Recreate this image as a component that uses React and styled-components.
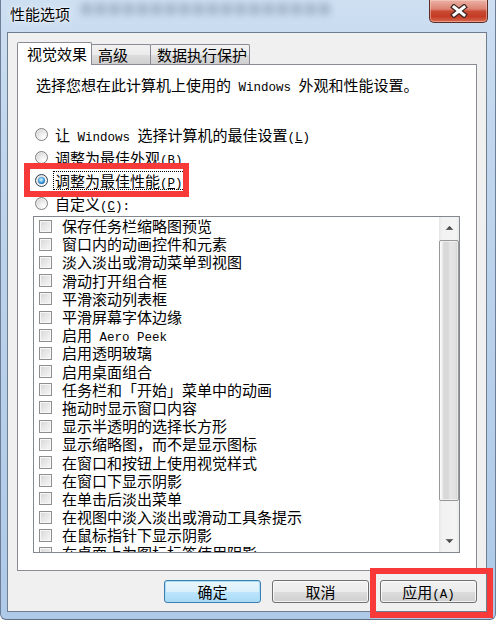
import React from "react";
import styled, { createGlobalStyle } from "styled-components";

const FONT = `"Noto Sans CJK SC", "Noto Sans CJK JP", "Noto Sans", sans-serif`;

const GlobalStyle = createGlobalStyle`
  html, body { margin: 0; padding: 0; background: #ffffff; }
  body { font-family: ${FONT}; }
  * { box-sizing: border-box; }
`;

const Window = styled.div`
  position: relative;
  width: 496px;
  height: 620px;
  display: flex;
  flex-direction: column;
  overflow: hidden;
  font-family: ${FONT};
  color: #000;
  background: linear-gradient(180deg, #cddff1 0%, #c2d7ee 20%, #b7cfea 60%, #aecae8 100%);
  border-left: 1px solid #6d7f96;
  border-right: 1px solid #6d7f96;
  border-bottom: 1px solid #5f7088;
  border-radius: 0 0 6px 6px;
`;

const TitleBar = styled.div`
  position: relative;
  height: 32px;
  flex: none;
  display: flex;
  align-items: center;
  padding-left: 9px;
`;

const Backdrop = styled.div`
  position: absolute;
  left: 80px;
  top: 3px;
  width: 250px;
  height: 12px;
  filter: blur(3.5px);
  opacity: 0.3;
  background: repeating-linear-gradient(90deg, #51627a 0 11px, transparent 11px 14px);
`;

const Title = styled.div`
  position: relative;
  font-size: 15px;
  line-height: 18px;
  margin-top: -4px;
  text-shadow: 0 0 6px rgba(255, 255, 255, 0.95), 0 0 2px rgba(255, 255, 255, 0.9);
`;

const CloseButton = styled.div`
  position: absolute;
  top: 0;
  right: 7px;
  width: 59px;
  height: 23px;
  display: flex;
  align-items: center;
  justify-content: center;
  border: 1px solid #5c2c25;
  border-top: none;
  border-radius: 0 0 5px 5px;
  background: linear-gradient(180deg, #eab2a5 0%, #dd8574 40%, #c94a33 52%, #c43c26 75%, #d86a50 100%);
  box-shadow: inset 0 0 0 1px rgba(255, 220, 210, 0.45);
`;

const Client = styled.div`
  flex: 1;
  margin: 0 8px 7px 6px;
  border: 1px solid #6f7e8f;
  background: #f0f0f0;
  padding: 9px 9px 0 9px;
  display: flex;
  flex-direction: column;
`;

const TabStrip = styled.div`
  height: 22px;
  display: flex;
  align-items: flex-start;
  position: relative;
  z-index: 2;
`;

const Tab = styled.div`
  position: relative;
  width: ${(p) => p.$w}px;
  height: ${(p) => (p.$active ? 23 : 20)}px;
  margin-top: ${(p) => (p.$active ? 0 : 2)}px;
  margin-left: ${(p) => (p.$first ? 0 : -1)}px;
  padding-left: ${(p) => (p.$active ? 9 : 6)}px;
  border: 1px solid #898c95;
  border-bottom: none;
  border-radius: 2px 2px 0 0;
  font-size: 15px;
  line-height: ${(p) => (p.$active ? 21 : 19)}px;
  white-space: nowrap;
  z-index: ${(p) => (p.$active ? 2 : 1)};
  background: ${(p) =>
    p.$active
      ? "#ffffff"
      : "linear-gradient(180deg, #f2f2f2 0%, #ebebeb 50%, #dddddd 51%, #cfcfcf 100%)"};
`;

const TabPage = styled.div`
  position: relative;
  z-index: 1;
  height: 507px;
  flex: none;
  background: #ffffff;
  border: 1px solid #898c95;
  display: flex;
  flex-direction: column;
`;

const Description = styled.div`
  margin: 11px 0 0 18px;
  height: 18px;
  font-size: 15px;
  line-height: 18px;
  white-space: nowrap;
`;

const Lat = styled.span`
  font-family: "Liberation Mono", monospace;
  font-size: 12.5px;
  line-height: 1;
  white-space: pre;
`;

const U = styled.span`
  text-decoration: underline;
  text-underline-offset: 1px;
`;

const RadioGroup = styled.div`
  margin-top: 29px;
  display: flex;
  flex-direction: column;
`;

const RadioRow = styled.div`
  height: 23px;
  display: flex;
  align-items: center;
  padding-left: 17px;
  gap: 6px;
  font-size: 15px;
  white-space: nowrap;
`;

const RadioCircle = styled.span`
  position: relative;
  width: 13px;
  height: 13px;
  flex: none;
  border-radius: 50%;
  border: 1px solid ${(p) => (p.$on ? "#2c3e50" : "#7d7e7e")};
  background: radial-gradient(circle at 70% 75%, #ffffff 0%, #ececec 40%, #c8c8c8 100%);
  box-shadow: inset 0 0 0 1px rgba(255, 255, 255, 0.5);
  &::after {
    content: "";
    display: ${(p) => (p.$on ? "block" : "none")};
    position: absolute;
    left: 2px;
    top: 2px;
    width: 7px;
    height: 7px;
    border-radius: 50%;
    background: radial-gradient(circle at 45% 40%, #e2f6ff 0%, #7cc6f2 30%, #1f78c1 65%, #0c3d6c 100%);
  }
`;

const RadioLabel = styled.span`
  display: inline-block;
  height: 17px;
  line-height: 17px;
  padding: 0 1px;
  outline: ${(p) => (p.$focus ? "1px dotted #000" : "none")};
`;

const ListBox = styled.div`
  margin: 1px 16px 0 15px;
  height: 337px;
  border: 1px solid #828790;
  display: flex;
  flex: none;
`;

const ListRows = styled.div`
  flex: 1;
  overflow: hidden;
  padding: 0 0 0 5px;
`;

const CheckRow = styled.div`
  height: 18.2px;
  display: flex;
  align-items: center;
  gap: 10px;
  font-size: 15px;
  white-space: nowrap;
`;

const CheckText = styled.span`
  display: inline-block;
  height: 18px;
  line-height: 18px;
`;

const CheckBox = styled.span`
  width: 13px;
  height: 13px;
  flex: none;
  border: 1px solid #8f8f8f;
  box-shadow: inset 0 0 0 1px #f7f7f7;
  background: linear-gradient(135deg, #d5d5d5 0%, #e6e6e6 45%, #f7f7f7 100%);
`;

const ScrollBar = styled.div`
  width: 20px;
  flex: none;
  display: flex;
  flex-direction: column;
  padding: 1px 0 1px 0;
  background: linear-gradient(90deg, #e6e6e6 0%, #f2f2f2 15%, #f4f4f4 85%, #e9e9e9 100%);
`;

const ScrollArrow = styled.div`
  height: 20px;
  flex: none;
  display: flex;
  align-items: center;
  justify-content: center;
`;

const Thumb = styled.div`
  margin-top: 2px;
  height: 261px;
  flex: none;
  border: 1px solid #979797;
  border-radius: 2px;
  background: linear-gradient(90deg, #f6f6f6 0%, #f3f3f3 12%, #dadada 18%, #d8d8d8 45%, #e6e6e6 55%, #e1e1e1 85%, #cdcdcd 100%);
  box-shadow: inset 0 0 0 1px rgba(255, 255, 255, 0.5);
`;

const Track = styled.div`
  flex: 1;
`;

const ButtonRow = styled.div`
  margin-top: 9px;
  display: flex;
  justify-content: flex-end;
  gap: 11px;
`;

const Button = styled.div`
  width: 97px;
  height: 23px;
  display: flex;
  align-items: center;
  justify-content: center;
  font-size: 15px;
  border-radius: 3px;
  border: 1px solid ${(p) => (p.$default ? "#3c7fb1" : "#707070")};
  background: ${(p) =>
    p.$default
      ? "linear-gradient(180deg, #eaf6fd 0%, #d9f0fc 50%, #bee6fd 51%, #a7d9f5 100%)"
      : "linear-gradient(180deg, #f2f2f2 0%, #ebebeb 50%, #dddddd 51%, #cfcfcf 100%)"};
  box-shadow: inset 0 0 0 1px ${(p) => (p.$default ? "#a8dcf7" : "rgba(255,255,255,0.75)")};
  white-space: nowrap;
`;

const ButtonText = styled.span`
  display: inline-block;
  line-height: 18px;
  height: 18px;
`;

const Annotation = styled.div`
  position: absolute;
  left: ${(p) => p.$x}px;
  top: ${(p) => p.$y}px;
  width: ${(p) => p.$w}px;
  height: ${(p) => p.$h}px;
  border: 6px solid #f73939;
  pointer-events: none;
  z-index: 10;
`;

const CloseGlyph = () => (
  <svg width="18" height="14" viewBox="0 0 18 14">
    <g strokeLinecap="square">
      <line x1="4" y1="3" x2="14" y2="11" stroke="#3b2622" strokeWidth="5.4" />
      <line x1="14" y1="3" x2="4" y2="11" stroke="#3b2622" strokeWidth="5.4" />
      <line x1="4" y1="3" x2="14" y2="11" stroke="#ffffff" strokeWidth="3" />
      <line x1="14" y1="3" x2="4" y2="11" stroke="#ffffff" strokeWidth="3" />
    </g>
  </svg>
);

const ArrowGlyph = ({ down }) => (
  <svg width="9" height="6" viewBox="0 0 9 6">
    <defs>
      <linearGradient id={down ? "ad" : "au"} x1="0" y1="0" x2="0" y2="1">
        <stop offset="0" stopColor={down ? "#707070" : "#202020"} />
        <stop offset="1" stopColor={down ? "#202020" : "#707070"} />
      </linearGradient>
    </defs>
    <polygon
      points={down ? "0.5,1 8.5,1 4.5,5" : "0.5,5 8.5,5 4.5,1"}
      fill={`url(#${down ? "ad" : "au"})`}
    />
  </svg>
);

const radios = [
  { label: <>让<Lat> Windows </Lat>选择计算机的最佳设置<Lat>(<U>L</U>)</Lat></> },
  { label: <>调整为最佳外观<Lat>(<U>B</U>)</Lat></> },
  { label: <>调整为最佳性能<Lat>(<U>P</U>)</Lat></>, on: true },
  { label: <>自定义<Lat>(<U>C</U>):</Lat></> },
];

const items = [
  "保存任务栏缩略图预览",
  "窗口内的动画控件和元素",
  "淡入淡出或滑动菜单到视图",
  "滑动打开组合框",
  "平滑滚动列表框",
  "平滑屏幕字体边缘",
  <>启用<Lat> Aero Peek</Lat></>,
  "启用透明玻璃",
  "启用桌面组合",
  "任务栏和「开始」菜单中的动画",
  "拖动时显示窗口内容",
  "显示半透明的选择长方形",
  "显示缩略图，而不是显示图标",
  "在窗口和按钮上使用视觉样式",
  "在窗口下显示阴影",
  "在单击后淡出菜单",
  "在视图中淡入淡出或滑动工具条提示",
  "在鼠标指针下显示阴影",
  "在桌面上为图标标签使用阴影",
];

export default function App() {
  return (
    <>
      <GlobalStyle />
      <Window>
        <TitleBar>
          <Backdrop />
          <Title>性能选项</Title>
          <CloseButton>
            <CloseGlyph />
          </CloseButton>
        </TitleBar>
        <Client>
          <TabStrip>
            <Tab $active $first $w={75}>视觉效果</Tab>
            <Tab $w={60}>高级</Tab>
            <Tab $w={100}>数据执行保护</Tab>
          </TabStrip>
          <TabPage>
            <Description>
              选择您想在此计算机上使用的<Lat> Windows </Lat>外观和性能设置。
            </Description>
            <RadioGroup>
              {radios.map((r, i) => (
                <RadioRow key={i}>
                  <RadioCircle $on={r.on} />
                  <RadioLabel $focus={r.on}>{r.label}</RadioLabel>
                </RadioRow>
              ))}
            </RadioGroup>
            <ListBox>
              <ListRows>
                {items.map((t, i) => (
                  <CheckRow key={i}>
                    <CheckBox />
                    <CheckText>{t}</CheckText>
                  </CheckRow>
                ))}
              </ListRows>
              <ScrollBar>
                <ScrollArrow>
                  <ArrowGlyph />
                </ScrollArrow>
                <Thumb />
                <Track />
                <ScrollArrow>
                  <ArrowGlyph down />
                </ScrollArrow>
              </ScrollBar>
            </ListBox>
          </TabPage>
          <ButtonRow>
            <Button $default><ButtonText>确定</ButtonText></Button>
            <Button><ButtonText>取消</ButtonText></Button>
            <Button><ButtonText>应用<Lat>(A)</Lat></ButtonText></Button>
          </ButtonRow>
        </Client>
        <Annotation $x={23} $y={163} $w={165} $h={34} />
        <Annotation $x={369} $y={568} $w={123} $h={50} />
      </Window>
    </>
  );
}
